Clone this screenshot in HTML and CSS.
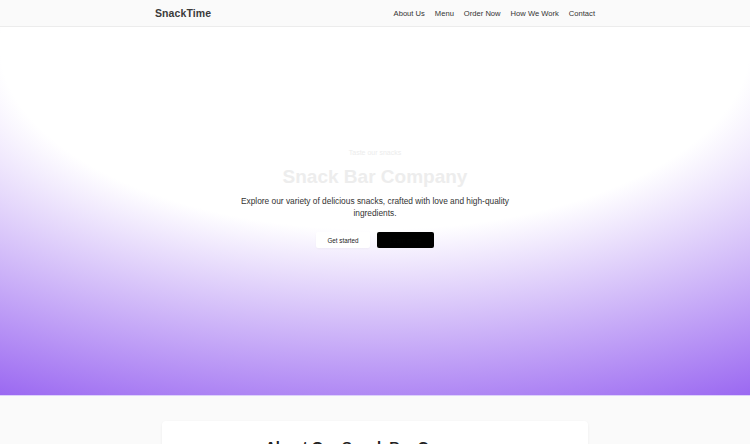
FILE: index.html
```html
<!DOCTYPE html>
<html lang="en">
<head>
<meta charset="utf-8">
<title>SnackTime</title>
<link rel="stylesheet" href="styles.css">
</head>
<body>
<header class="navbar">
  <div class="nav-inner">
    <a class="logo" href="#">SnackTime</a>
    <nav class="nav-links">
      <a href="#">About Us</a>
      <a href="#">Menu</a>
      <a href="#">Order Now</a>
      <a href="#">How We Work</a>
      <a href="#">Contact</a>
    </nav>
  </div>
</header>
<section class="hero">
  <p class="eyebrow">Taste our snacks</p>
  <h1 class="hero-title">Snack Bar Company</h1>
  <p class="hero-text">Explore our variety of delicious snacks, crafted with love and high-quality ingredients.</p>
  <div class="hero-actions">
    <a class="btn btn-light" href="#">Get started</a>
    <a class="btn btn-dark" href="#">Learn more</a>
  </div>
</section>
<section class="about">
  <div class="card">
    <h2 class="card-title">About Our Snack Bar Company</h2>
  </div>
</section>
</body>
</html>
```
FILE: styles.css
```css
* { box-sizing: border-box; }
html, body { margin: 0; padding: 0; }
body {
  font-family: "Liberation Sans", Arial, sans-serif;
  background: #fafafa;
  color: #222;
  overflow: hidden;
}
a { text-decoration: none; color: inherit; }

.navbar {
  height: 27px;
  background: #fafafa;
  border-bottom: 1px solid #ececec;
  box-shadow: 0 1px 2px rgba(0,0,0,0.04);
}
.nav-inner {
  width: 440px;
  height: 100%;
  margin: 0 auto;
  display: flex;
  align-items: center;
  justify-content: space-between;
}
.logo {
  font-size: 10.5px;
  font-weight: 700;
  color: #3a3a3a;
  letter-spacing: 0.1px;
}
.nav-links {
  display: flex;
  gap: 10px;
}
.nav-links a {
  font-size: 7.6px;
  color: #333;
}

.hero {
  height: 369px;
  background: radial-gradient(125% 125% at 50% 5%, #ffffff 40%, #7c3aed 100%);
  border-bottom: 1px solid #dcd0fb;
  display: flex;
  flex-direction: column;
  align-items: center;
  padding-top: 121px;
  text-align: center;
}
.eyebrow {
  margin: 0;
  font-size: 7px;
  line-height: 10px;
  color: #ececec;
}
.hero-title {
  margin: 8px 0 0;
  font-size: 19px;
  line-height: 22px;
  font-weight: 700;
  color: #ededed;
}
.hero-text {
  margin: 7px 0 0;
  max-width: 275px;
  font-size: 8.35px;
  line-height: 12px;
  color: #333;
}
.hero-actions {
  margin-top: 13px;
  display: flex;
  gap: 7px;
}
.btn {
  height: 16px;
  display: flex;
  align-items: center;
  justify-content: center;
  font-size: 6.3px;
  border-radius: 2px;
}
.btn-light {
  width: 54px;
  background: #ffffff;
  color: #222;
  box-shadow: 0 1px 2px rgba(0,0,0,0.03);
}
.btn-dark {
  width: 57px;
  background: #000;
  color: #050505;
}

.about {
  padding-top: 25px;
  background: #fafafa;
}
.card {
  width: 426px;
  margin: 0 auto;
  background: #fff;
  border-radius: 4px;
  box-shadow: 0 1px 3px rgba(0,0,0,0.06);
  padding: 17px 16px 16px;
  min-height: 120px;
}
.card-title {
  margin: 0;
  text-align: center;
  font-size: 14.7px;
  line-height: 18px;
  font-weight: 700;
  color: #222;
}
```
